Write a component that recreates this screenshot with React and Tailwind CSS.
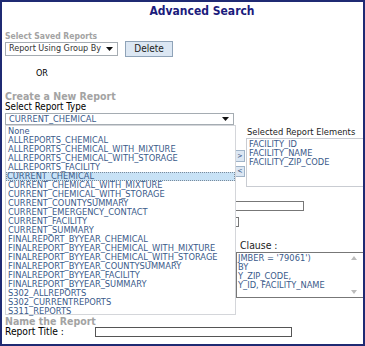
import React from 'react'

const reportTypes = [
  'None',
  'ALLREPORTS_CHEMICAL',
  'ALLREPORTS_CHEMICAL_WITH_MIXTURE',
  'ALLREPORTS_CHEMICAL_WITH_STORAGE',
  'ALLREPORTS_FACILITY',
  'CURRENT_CHEMICAL',
  'CURRENT_CHEMICAL_WITH_MIXTURE',
  'CURRENT_CHEMICAL_WITH_STORAGE',
  'CURRENT_COUNTYSUMMARY',
  'CURRENT_EMERGENCY_CONTACT',
  'CURRENT_FACILITY',
  'CURRENT_SUMMARY',
  'FINALREPORT_BYYEAR_CHEMICAL',
  'FINALREPORT_BYYEAR_CHEMICAL_WITH_MIXTURE',
  'FINALREPORT_BYYEAR_CHEMICAL_WITH_STORAGE',
  'FINALREPORT_BYYEAR_COUNTYSUMMARY',
  'FINALREPORT_BYYEAR_FACILITY',
  'FINALREPORT_BYYEAR_SUMMARY',
  'S302_ALLREPORTS',
  'S302_CURRENTREPORTS',
  'S311_REPORTS',
]

const selected = ['FACILITY_ID', 'FACILITY_NAME', 'FACILITY_ZIP_CODE']

const clause = ["JMBER = '79061')", 'BY', 'Y_ZIP_CODE,', 'Y_ID, FACILITY_NAME']

const Arrow = () => (
  <svg width="7" height="4" viewBox="0 0 7 4" className="shrink-0">
    <path d="M0 0h7L3.5 4z" fill="#111" />
  </svg>
)

// blue option text, wide Verdana-like face
const optionText = "font-['DejaVu_Sans',sans-serif] text-[8.3px] leading-[9px] text-[#3a5a8a] whitespace-nowrap"

const App = () => {
  return (
    <div className="relative w-[365px] h-[346px] overflow-hidden border-2 border-[#1f2a73] bg-white font-['DejaVu_Sans_Condensed','Liberation_Sans',sans-serif] text-black">
      {/* title */}
      <div className="flex justify-center pl-[39px] mt-[1px] h-[16px]">
        <h1 className="text-[12px] leading-[16px] font-bold text-[#1b1b7c]">Advanced Search</h1>
      </div>

      {/* saved reports */}
      <div className="mt-[12px] ml-[3px] text-[8.5px] leading-[10px] font-bold text-[#a3a3a3] whitespace-nowrap">
        Select Saved Reports
      </div>
      <div className="flex items-center ml-[3px]">
        <div className="flex items-center justify-between w-[113px] h-[14px] border border-[#a5acb2] pl-[3px] pr-[4px] text-[9px] text-[#333] whitespace-nowrap overflow-hidden">
          <span>Report Using Group By</span>
          <Arrow />
        </div>
        <button className="ml-[7px] w-[48px] h-[16px] bg-[#dce7f3] border border-[#8fa3b8] text-[10px] leading-[14px] text-[#222]">
          Delete
        </button>
      </div>
      <div className="mt-[11px] ml-[34px] text-[9px] leading-[10px]">OR</div>

      {/* new report */}
      <div className="mt-[12px] ml-[3px] text-[10.5px] leading-[12px] font-bold text-[#a3a3a3] whitespace-nowrap">
        Create a New Report
      </div>
      <div className="ml-[3px] text-[9.7px] leading-[10px] whitespace-nowrap">Select Report Type</div>
      <div className={`mt-[1px] ml-[3px] flex items-center justify-between w-[229px] h-[12px] border border-[#a5acb2] pl-[3px] pr-[4px] ${optionText} text-[#2f4d7a]`}>
        <span>CURRENT_CHEMICAL</span>
        <Arrow />
      </div>

      {/* element pickers */}
      <div className="flex mt-[1px] h-[62px]">
        <div className="w-[233px] shrink-0" />
        <div className="flex flex-col w-[10px] shrink-0 pt-[24px] gap-[4px]">
          <button className="h-[12px] bg-[#dce7f3] border border-[#9fb3c8] text-[7px] leading-[10px] text-[#2f4d7a]">&gt;</button>
          <button className="h-[11px] bg-[#dce7f3] border border-[#9fb3c8] text-[7px] leading-[9px] text-[#2f4d7a]">&lt;</button>
        </div>
        <div className="ml-[1px] flex flex-col">
          <div className="ml-[1px] mt-[1px] text-[9.3px] leading-[10px] text-[#222] whitespace-nowrap">Selected Report Elements</div>
          <div className={`mt-[1px] w-[130px] h-[49px] border border-[#c9ccd2] px-[2px] pt-[1px] ${optionText}`}>
            {selected.map((s) => (
              <div key={s}>{s}</div>
            ))}
          </div>
        </div>
      </div>

      {/* filter inputs */}
      <div className="mt-[13px] ml-[120px] w-[182px] h-[10px] border border-[#777]" />
      <div className="mt-[6px] ml-[130px] w-[107px] h-[10px] border border-[#777]" />

      {/* clause */}
      <div className="mt-[13px] ml-[238px] text-[10.4px] leading-[10px] text-[#222] whitespace-nowrap">Clause :</div>
      <div className={`relative mt-[2px] ml-[234px] w-[128px] h-[46px] border border-[#777] pl-[1px] pt-[1px] ${optionText}`}>
        {clause.map((c) => (
          <div key={c}>{c}</div>
        ))}
        <svg width="6" height="4" viewBox="0 0 6 4" className="absolute right-[6px] top-[3px]">
          <path d="M0 4h6L3 0z" fill="#bbb" />
        </svg>
        <svg width="6" height="4" viewBox="0 0 6 4" className="absolute right-[6px] bottom-[3px]">
          <path d="M0 0h6L3 4z" fill="#bbb" />
        </svg>
      </div>

      {/* name */}
      <div className="mt-[18px] ml-[3px] text-[10.5px] leading-[10px] font-bold text-[#a3a3a3] whitespace-nowrap">Name the Report</div>
      <div className="flex items-center ml-[3px] mt-[1px]">
        <span className="w-[90px] text-[10.2px] leading-[10px] whitespace-nowrap">Report Title :</span>
        <div className="w-[197px] h-[10px] border border-[#555]" />
      </div>

      {/* open dropdown list */}
      <ul className={`absolute left-[3px] top-[123px] w-[231px] h-[190px] bg-white border border-[#d4d6da] pt-[1px] ${optionText}`}>
        {reportTypes.map((t) => (
          <li
            key={t}
            className={
              t === 'CURRENT_CHEMICAL'
                ? 'pl-[1px] bg-[#c8e2f6] outline outline-1 outline-dotted outline-[#7a8a9a] -outline-offset-1'
                : 'pl-[2px]'
            }
          >
            {t}
          </li>
        ))}
      </ul>
    </div>
  )
}

export default App
